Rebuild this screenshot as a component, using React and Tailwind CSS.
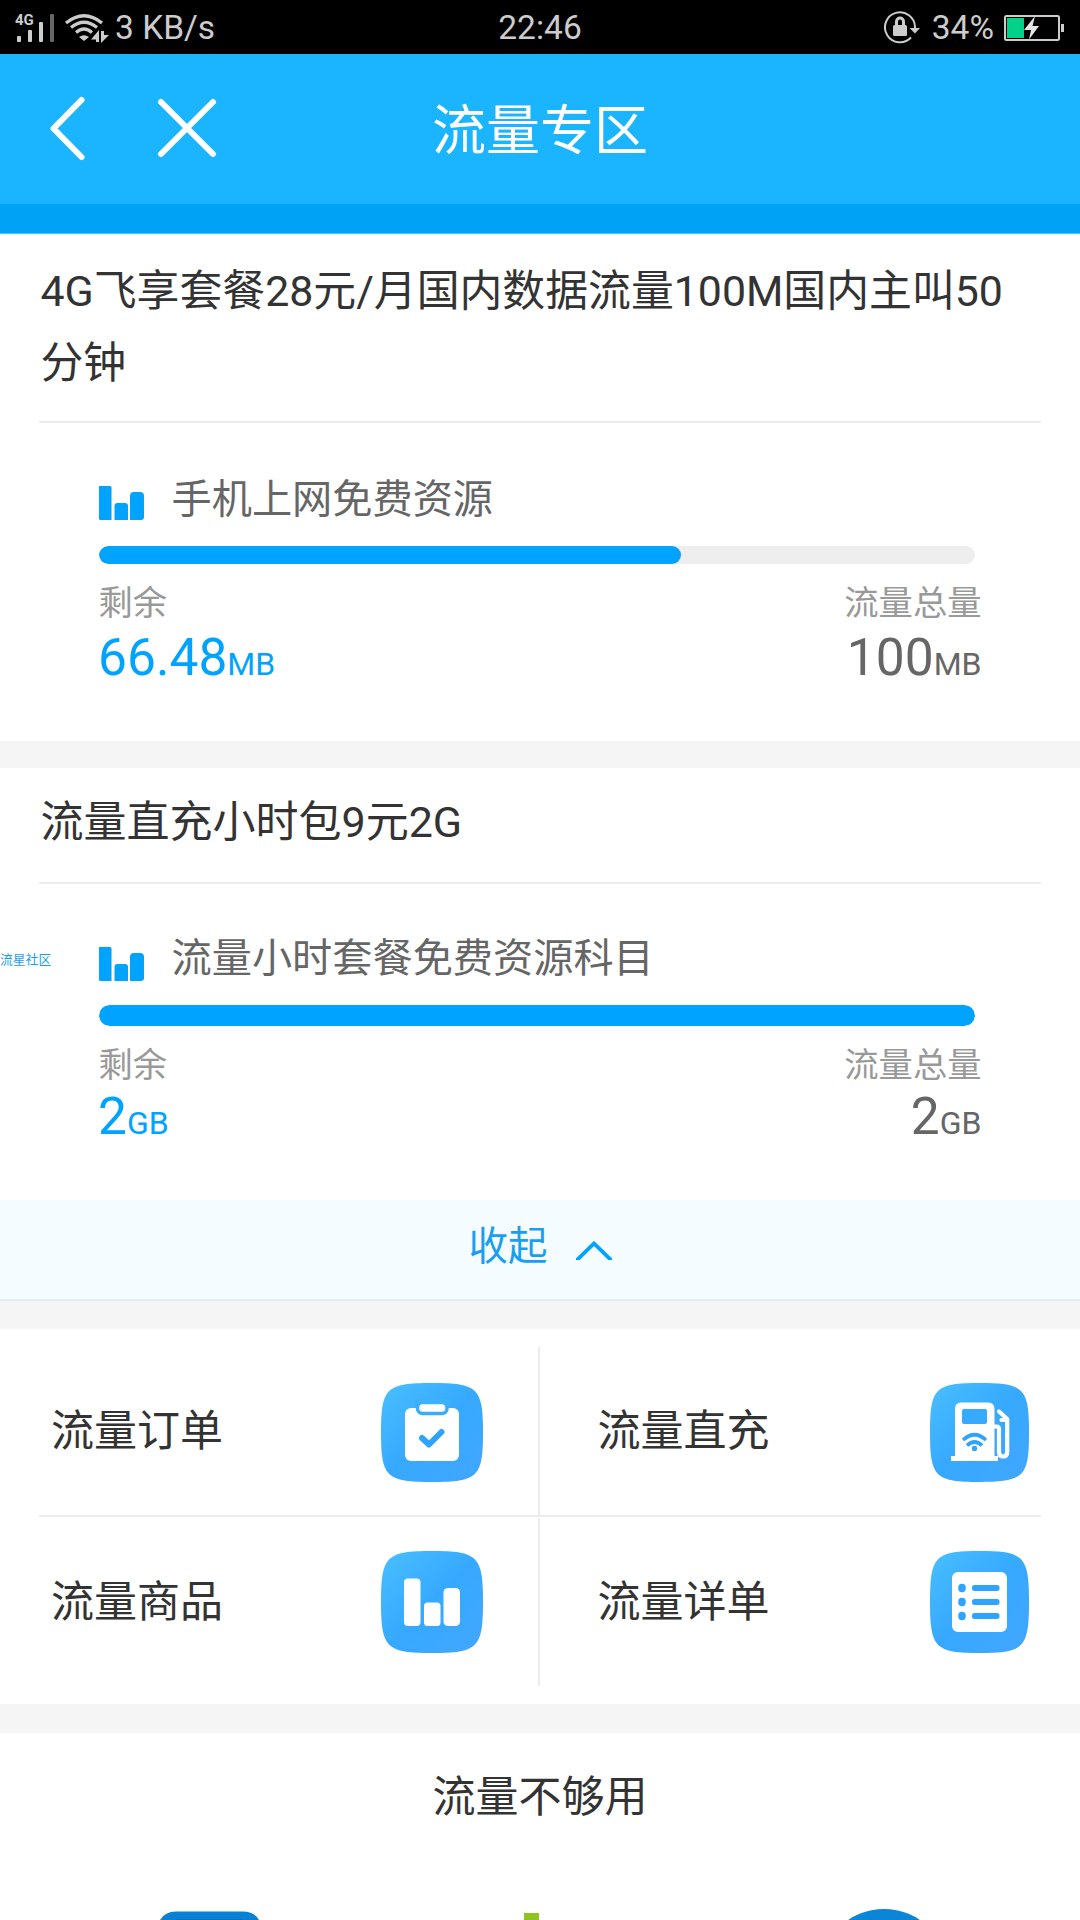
import React from "react";

const TILE = "M0 50C0 5 5 0 50 0C95 0 100 5 100 50C100 95 95 100 50 100C5 100 0 95 0 50Z";

function Tile({ id, w, h, children }) {
  return (
    <svg width={w} height={h} viewBox={`0 0 ${w} ${h}`} className="block shrink-0">
      <defs>
        <linearGradient id={id} x1="0" y1="0" x2="1" y2="1">
          <stop offset="0" stopColor="#49bfff" />
          <stop offset="0.5" stopColor="#36a9ff" />
          <stop offset="1" stopColor="#42a6ff" />
        </linearGradient>
      </defs>
      <path d={TILE} transform={`scale(${w / 100} ${h / 100})`} fill={`url(#${id})`} />
      {children}
    </svg>
  );
}

function OrderIcon() {
  return (
    <Tile id="order" w={102} h={99}>
      <rect x="24" y="25" width="54" height="53" rx="6" fill="#fff" />
      <rect x="36.500" y="19.500" width="29.500" height="11" rx="5" fill="#fff" stroke="#38adff" strokeWidth="3.500" />
      <rect x="34" y="16" width="35" height="4.800" fill="#3cb2ff" />
      <path d="M41 55L48 61.500L60.500 49" fill="none" stroke="#2ea3ff" strokeWidth="6" strokeLinecap="round" strokeLinejoin="round" />
    </Tile>
  );
}

function PumpIcon() {
  return (
    <Tile id="pump" w={99} h={99}>
      <path d="M25 73V26q0-6.500 6-6.500H58q6.500 0 6.500 6.500V73H68v5H21v-5Z" fill="#fff" />
      <rect x="32" y="26" width="25" height="15" rx="2" fill="#36aaff" />
      <path d="M33 57Q44.500 46.500 56 57" fill="none" stroke="#2fa4ff" strokeWidth="3.600" />
      <path d="M37 62.500Q44.500 55.500 52 62.500" fill="none" stroke="#2fa4ff" strokeWidth="3.600" />
      <circle cx="44.500" cy="65.500" r="2.700" fill="#2fa4ff" />
      <path d="M64 43.500H66.500Q69 43.500 69 46V69Q69 73.500 73 73.500Q77.200 73.500 77.200 69V36L69 28.500M71.500 37H77" fill="none" stroke="#fff" strokeWidth="4.200" strokeLinecap="round" strokeLinejoin="round" />
    </Tile>
  );
}

function GoodsIcon() {
  return (
    <Tile id="goods" w={102} h={102}>
      <rect x="23" y="27.500" width="16.500" height="47.500" rx="4" fill="#fff" />
      <rect x="43" y="51.500" width="16.500" height="23.500" rx="3.500" fill="#fff" />
      <rect x="62.500" y="37" width="16.500" height="38" rx="4.500" fill="#fff" />
    </Tile>
  );
}

function DetailIcon() {
  return (
    <Tile id="detail" w={99} h={102}>
      <rect x="22" y="21" width="55" height="60" rx="6" fill="#fff" />
      {[37, 51, 65].map((y) => (
        <g key={y} fill="#2fa4ff">
          <ellipse cx="32" cy={y} rx="3.800" ry="4.200" />
          <rect x="42" y={y - 3} width="27.500" height="6" rx="2.500" />
        </g>
      ))}
    </Tile>
  );
}

function BarsIcon() {
  return (
    <svg width="45" height="34" viewBox="0 0 45 34" className="block">
      <g fill="#00a3ff">
        <path d="M0 0H11q1.500 0 1.500 1.500V34H1.500Q0 34 0 32.500Z" />
        <path d="M15.500 34V20q0-3 3-3H26q3 0 3 3V34Z" />
        <path d="M31 34V10q0-4 4-4H41q4 0 4 4V31q0 3-3 3Z" />
      </g>
    </svg>
  );
}

function StatusBar() {
  return (
    <div className="grid h-[54px] grid-cols-3 bg-black text-[33.500px] leading-[56px] text-[#cccccc]">
      <div className="flex items-center">
        <svg width="115" height="54" viewBox="0 0 115 54" className="block shrink-0">
          <text x="15" y="24" fontSize="15" fontWeight="700" fill="#ccc" fontFamily="Roboto, sans-serif">4G</text>
          <g fill="#ccc">
            <rect x="17" y="35" width="4" height="6" rx="1" />
            <rect x="28" y="29" width="4" height="12" rx="1" />
            <rect x="39" y="21" width="4" height="20" rx="1" />
            <rect x="50" y="13" width="4" height="28" rx="1" fill="#666" />
            <path d="M84 40L79 36Q84 32.500 89 36Z" />
            <path d="M91 38.500L99 29V41H96V38.500ZM101 30H104V34H109L101 42Z" />
          </g>
          <g fill="none" stroke="#ccc" strokeWidth="3.200">
            <path d="M66 22Q84 7.500 102 22" />
            <path d="M71 26.500Q84 16 97 26.500" />
            <path d="M76 31.500Q84 24.500 92 31.500" />
          </g>
        </svg>
        <span>3 KB/s</span>
      </div>
      <div className="text-center">22:46</div>
      <div className="flex items-center justify-end pr-4">
        <svg width="37" height="36" viewBox="0 0 37 36" className="mr-[11px] block">
          <path d="M27 27.500A15 15 0 1 1 31 17V19" fill="none" stroke="#ccc" strokeWidth="2" />
          <path d="M25.500 18H36L31 23.500Z" fill="#ccc" />
          <rect x="9" y="15" width="14" height="11" rx="1.500" fill="#ccc" />
          <path d="M12.500 16V11.500a3.500 3.500 0 0 1 7 0V16" fill="none" stroke="#ccc" strokeWidth="3" />
        </svg>
        <span className="mr-2.5">34%</span>
        <svg width="60" height="26" viewBox="0 0 60 26" className="block">
          <rect x="1" y="1" width="54" height="24" rx="1.500" fill="none" stroke="#ccc" strokeWidth="2" />
          <rect x="3" y="3" width="17" height="20" fill="#00d28a" />
          <rect x="57" y="9" width="3" height="8" fill="#ccc" />
          <path d="M31 1L20 15H27L25 24.500L35 11H28.500Z" fill="#e6e6e6" />
        </svg>
      </div>
    </div>
  );
}

function Usage({ name, percent, value, total, unit, second }) {
  return (
    <div className="pl-[99px] pr-[98.500px]">
      <div className={second ? "flex h-[121px] items-start pt-[63px]" : "flex h-[123px] items-start pt-[63px]"}>
        <BarsIcon />
        <span className={second ? "-mt-[18px] ml-[27.500px] text-[40.200px] leading-[60px] text-[#666]" : "-mt-[16px] ml-[27.500px] text-[40.200px] leading-[60px] text-[#666]"}>{name}</span>
      </div>
      <div className={second ? "mr-[6.500px] h-[21px] overflow-hidden rounded-full bg-[#eee]" : "mr-[6.500px] h-[18px] overflow-hidden rounded-full bg-[#eee]"}>
        <div className="h-full rounded-full bg-[#00a3ff]" style={{ width: percent }} />
      </div>
      <div className="flex h-[76px] justify-between pt-[14px] text-[34.300px] leading-[50px] text-[#999]">
        <span className="-ml-[0.500px]">剩余</span>
        <span>流量总量</span>
      </div>
      <div className={second ? "-mt-[15px] flex h-[60px] justify-between text-[51.500px] leading-[60px]" : "-mt-[12px] flex h-[60px] justify-between text-[51.500px] leading-[60px]"}>
        <div className="-ml-px text-[#00a3ff]">{value}<span className="text-[32px]">{unit}</span></div>
        <div className="text-[#666]">{total}<span className="text-[32px]">{unit}</span></div>
      </div>
    </div>
  );
}

function Entry({ label, left, children }) {
  return (
    <div className={left ? "flex h-[168px] items-center justify-between border-r-2 border-[#ebebeb] pl-[12px] pr-[55px]" : "flex h-[168px] items-center justify-between pl-[57.500px] pr-[12px]"}>
      <span className="text-[43px] leading-[64px] text-[#333]">{label}</span>
      {children}
    </div>
  );
}

export default function App() {
  return (
    <div className="relative h-[1920px] w-[1080px] overflow-hidden bg-white font-['Roboto','Noto_Sans_CJK_SC',sans-serif] text-[#333]">
      <StatusBar />
      <header className="grid h-[150px] grid-cols-3 items-center bg-[#1ab4ff]">
        <div className="flex items-center">
          <svg width="220" height="150" viewBox="0 0 220 150" className="block" fill="none" stroke="#fff" strokeWidth="6" strokeLinecap="round" strokeLinejoin="round">
            <path d="M81.500 46L53.500 74.500L81.500 103" />
            <path d="M161 48L213 100M213 48L161 100" />
          </svg>
        </div>
        <h1 className="pt-[5px] text-center text-[54px] leading-[80px] text-white">流量专区</h1>
      </header>
      <div className="h-[30px] border-b border-[#4dbdff] bg-[#00a2f6]" />

      <section className="h-[507px] border-t-2 border-[#f3f6f8]">
        <div className="mx-[39px] h-[187px] border-b-2 border-[#ebebeb] pl-[1.500px] pt-[20px] text-[42.850px] leading-[71.500px]">
          4G飞享套餐28元/月国内数据流量100M国内主叫50<br />分钟
        </div>
        <Usage name="手机上网免费资源" percent="66.48%" value="66.48" total="100" unit="MB" />
      </section>
      <div className="h-[27px] bg-[#f5f5f5]" />
      <section className="h-[432px]">
        <div className="mx-[39px] h-[116px] border-b-2 border-[#ebebeb] pl-[1.500px] pt-[19px] text-[43px] leading-[71.500px]">流量直充小时包9元2G</div>
        <Usage second name="流量小时套餐免费资源科目" percent="100%" value="2" total="2" unit="GB" />
      </section>

      <button className="flex h-[101px] w-full justify-center border-b-2 border-[#e3ebee] bg-[#f4fcff] pt-[17px] text-[39.500px] leading-[60px] text-[#1a9ff0]">
        收起
        <svg width="36" height="19" viewBox="0 0 36 19" className="ml-[28px] mt-[24px] block">
          <path d="M0 20L18 2.500L36 20" fill="none" stroke="#00a3ff" strokeWidth="3.800" />
        </svg>
      </button>
      <div className="h-[28px] bg-[#f5f5f5]" />

      <section className="h-[375px] px-[39px] pt-[18px]">
        <div className="grid grid-cols-2 border-b-2 border-[#ebebeb]">
          <Entry label="流量订单" left><div className="pt-[2px]"><OrderIcon /></div></Entry>
          <Entry label="流量直充"><div className="pt-[2px]"><PumpIcon /></div></Entry>
        </div>
        <div className="mt-[1px] grid grid-cols-2">
          <Entry label="流量商品" left><GoodsIcon /></Entry>
          <Entry label="流量详单"><DetailIcon /></Entry>
        </div>
      </section>
      <div className="h-[29px] bg-[#f5f5f5]" />

      <section>
        <h2 className="pt-[32px] text-center text-[43px] leading-[64px]">流量不够用</h2>
        <svg width="1080" height="91" viewBox="0 0 1080 91" className="block">
          <path d="M160 91Q165 82.500 176 82.500H243Q254 82.500 259 91Z" fill="#0880d4" />
          <path d="M176 90.500H243" stroke="#0571c3" strokeWidth="1" />
          <rect x="524" y="84" width="15" height="8" fill="#8fc31f" />
          <circle cx="884" cy="144" r="64" fill="#0b85d8" />
        </svg>
      </section>

      <span className="absolute left-0 top-[950px] text-[12.800px] leading-[20px] text-[#1a9ff0]">流星社区</span>
    </div>
  );
}
